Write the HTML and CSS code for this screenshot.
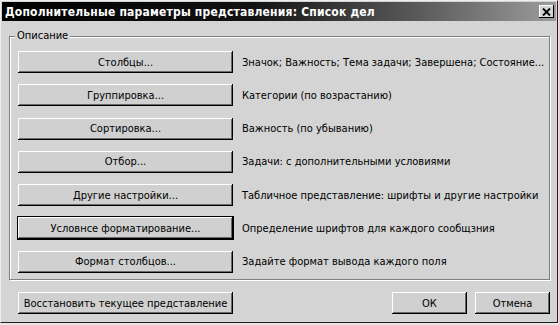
FILE: index.html
```html
<!DOCTYPE html>
<html lang="ru">
<head>
<meta charset="utf-8">
<title>Дополнительные параметры представления</title>
<link rel="stylesheet" href="styles.css">
</head>
<body>
<div class="window">
  <div class="titlebar">
    <span class="title">Дополнительные параметры представления: Список дел</span>
    <span class="close"><svg width="9" height="8" viewBox="0 0 9 8"><path d="M1 0.5 L8 7.5 M8 0.5 L1 7.5" stroke="#000" stroke-width="1.8"/></svg></span>
  </div>
  <div class="content">
    <div class="group">
      <span class="legend">Описание</span>
      <div class="row"><button class="btn wide">Столбцы...</button><span class="desc">Значок; Важность; Тема задачи; Завершена; Состояние...</span></div>
      <div class="row"><button class="btn wide">Группировка...</button><span class="desc">Категории (по возрастанию)</span></div>
      <div class="row"><button class="btn wide">Сортировка...</button><span class="desc">Важность (по убыванию)</span></div>
      <div class="row"><button class="btn wide">Отбор...</button><span class="desc">Задачи: с дополнительными условиями</span></div>
      <div class="row"><button class="btn wide">Другие настройки...</button><span class="desc">Табличное представление: шрифты и другие настройки</span></div>
      <div class="row"><button class="btn wide focus">Условнсе форматирование...</button><span class="desc">Определение шрифтов для каждого сообщзния</span></div>
      <div class="row"><button class="btn wide">Формат столбцов...</button><span class="desc">Задайте формат вывода каждого поля</span></div>
    </div>
    <div class="footer">
      <button class="btn wide">Восстановить текущее представление</button>
      <div class="spacer"></div>
      <button class="btn small">ОК</button>
      <button class="btn small">Отмена</button>
    </div>
  </div>
</div>
</body>
</html>
```
FILE: styles.css
```css
html, body {
  margin: 0;
  padding: 0;
  background: #e6e6e6;
}
body {
  width: 559px;
  height: 325px;
  overflow: hidden;
  font-family: "DejaVu Sans Condensed", "DejaVu Sans", sans-serif;
  font-size: 11px;
  color: #000;
}
.window {
  box-sizing: border-box;
  width: 558px;
  height: 323px;
  background: #d4d4d4;
  border-left: 1px solid #eeeeee;
  border-top: 1px solid #eeeeee;
  border-right: 1px solid #202020;
  border-bottom: 1px solid #202020;
  padding: 1px 1px 0 1px;
}
.titlebar {
  height: 19px;
  background: linear-gradient(to right, #000 0%, #121212 45%, #5a5a5a 75%, #9c9c9c 100%);
  display: flex;
  align-items: center;
  padding: 0 2px 0 3px;
}
.title {
  flex: 1;
  color: #fff;
  font-weight: bold;
  font-size: 12px;
  letter-spacing: 0.2px;
  white-space: nowrap;
}
.close {
  width: 15px;
  height: 13px;
  background: #d4d4d4;
  box-shadow: inset -1px -1px #000, inset 1px 1px #fff;
  display: flex;
  align-items: center;
  justify-content: center;
}
.content {
  padding: 15px 6px 0 7px;
}
.group {
  position: relative;
  box-sizing: border-box;
  height: 244px;
  padding: 15px 8px 0 9px;
  box-shadow: inset 1px 1px #808080, inset -1px -1px #808080, inset 2px 2px #fff, 1px 1px #fff;
  display: flex;
  flex-direction: column;
  gap: 11.3px;
}
.legend {
  position: absolute;
  top: -7px;
  left: 6px;
  padding: 0 2px;
  background: #d4d4d4;
  line-height: 14px;
}
.row {
  display: flex;
  align-items: center;
  gap: 9px;
}
.btn {
  font-family: inherit;
  font-size: 11px;
  color: #000;
  background: #d0d0d0;
  border: none;
  height: 22px;
  padding: 0;
  margin: 0;
  flex: none;
  box-shadow: inset -1px -1px #000, inset 1px 1px #fff, inset -2px -2px #6a6a6a;
}
.btn.wide {
  width: 215px;
}
.btn.focus {
  box-shadow: 0 0 0 1px #000, inset -1px -1px #000, inset 1px 1px #fff, inset -2px -2px #6a6a6a;
}
.btn.small {
  width: 75px;
}
.desc {
  white-space: nowrap;
}
.footer {
  display: flex;
  margin-top: 12px;
  padding-left: 9px;
}
.spacer {
  flex: 1;
}
.footer .btn.small + .btn.small {
  margin-left: 8px;
}
```
